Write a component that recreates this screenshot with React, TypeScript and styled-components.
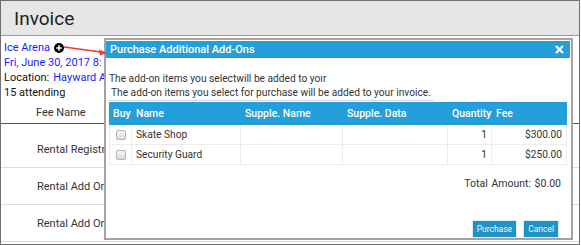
import React from "react";
import styled, { createGlobalStyle } from "styled-components";

const GlobalStyle = createGlobalStyle`
  html, body { margin: 0; padding: 0; background: #ffffff; }
  body { font-family: Roboto, "Liberation Sans", sans-serif; }
`;

const Frame = styled.div`
  position: relative;
  width: 580px;
  height: 245px;
  box-sizing: border-box;
  border: 1px solid #6e6e6e;
  overflow: hidden;
  background: #fff;
`;

const Header = styled.div`
  height: 34px;
  background: #e6e6e6;
  border-bottom: 1px solid #9a9a9a;
  display: flex;
  align-items: center;
  padding-left: 13px;
  font-size: 19px;
  color: #222;
`;

const Info = styled.div`
  padding: 4px 3px 0;
  display: flex;
  flex-direction: column;
  font-size: 11px;
  line-height: 15px;
  color: #111;
`;

const InfoLine = styled.div<{ $link?: boolean }>`
  display: flex;
  align-items: center;
  gap: 4px;
  white-space: nowrap;
  color: ${(p) => (p.$link ? "#1a1aff" : "#111")};
`;

const Link = styled.span`
  color: #1a1aff;
`;

const FeeTable = styled.div`
  margin-top: 1px;
  display: flex;
  flex-direction: column;
`;

const FeeHead = styled.div`
  height: 22px;
  border-bottom: 1px solid #555;
  display: flex;
  align-items: center;
  padding-left: 35px;
  font-size: 11px;
  color: #333;
`;

const FeeBody = styled.div`
  padding-top: 7px;
  display: flex;
  flex-direction: column;
`;

const FeeRow = styled.div`
  height: 36px;
  border-bottom: 1px solid #dcdcdc;
  display: flex;
  align-items: center;
  padding-left: 36px;
  font-size: 11px;
  color: #333;
  white-space: nowrap;
`;

const Dialog = styled.div`
  position: absolute;
  left: 103px;
  top: 37px;
  width: 469px;
  height: 202px;
  box-sizing: border-box;
  border: 2px solid #a3a3a3;
  background: #fff;
  display: flex;
  flex-direction: column;
`;

const TitleBar = styled.div`
  margin: 1px 1px 0 0;
  height: 17px;
  background: #259fd9;
  display: flex;
  align-items: center;
  justify-content: space-between;
  padding: 0 6px 0 4px;
  color: #fff;
  font-size: 11px;
  font-weight: 500;
`;

const Body = styled.div`
  flex: 1;
  display: flex;
  flex-direction: column;
  padding: 14px 4px 0 3px;
  font-size: 10.2px;
  color: #333;
`;

const Note = styled.div<{ $boxed?: boolean }>`
  line-height: 14px;
  white-space: nowrap;
  align-self: flex-start;
  padding-left: ${(p) => (p.$boxed ? "2px" : "0")};
  padding-right: ${(p) => (p.$boxed ? "3px" : "0")};
  border-bottom: ${(p) => (p.$boxed ? "1px solid #d6d6d6" : "none")};
`;

const Table = styled.div`
  margin-top: 1px;
  display: grid;
  grid-template-columns: 23px 109px 102px 105px 44px 75px;
`;

const HeadCell = styled.div`
  height: 23px;
  background: #259fd9;
  color: #fff;
  font-weight: 500;
  font-size: 10.5px;
  display: flex;
  align-items: center;
  padding-left: 4px;
  white-space: nowrap;
`;

const Cell = styled.div<{ $right?: boolean }>`
  height: 19px;
  border-bottom: 1px solid #ececec;
  border-right: 1px solid #ececec;
  display: flex;
  align-items: center;
  justify-content: ${(p) => (p.$right ? "flex-end" : "flex-start")};
  padding: 0 4px;
  font-size: 10.2px;
  color: #333;
  &:nth-child(6n + 1) {
    border-left: 1px solid #ececec;
    justify-content: center;
    padding: 0;
  }
`;

const Check = styled.span`
  width: 8px;
  height: 8px;
  border: 1px solid #b5b5b5;
  border-radius: 2px;
  background: linear-gradient(#f4f4f4, #dcdcdc);
`;

const Total = styled.div`
  margin-top: 12px;
  align-self: flex-end;
  padding-right: 6px;
  font-size: 10.5px;
  color: #333;
  word-spacing: 1px;
`;

const Actions = styled.div`
  margin-top: auto;
  margin-bottom: 1px;
  display: flex;
  justify-content: flex-end;
  gap: 8px;
  padding-right: 9px;
`;

const Button = styled.button`
  height: 16px;
  border: none;
  background: #1f93c6;
  color: #eaf6fc;
  font-family: Roboto, "Liberation Sans", sans-serif;
  font-size: 8.5px;
  padding: 0 4px;
  box-shadow: 0 0 1px #1f93c6;
`;

const Overlay = styled.svg`
  position: absolute;
  left: 0;
  top: 0;
  pointer-events: none;
`;

const PlusIcon = () => (
  <svg width="10" height="10" viewBox="0 0 10 10">
    <circle cx="5" cy="5" r="5" fill="#000" />
    <path d="M5 2.2v5.6M2.2 5h5.6" stroke="#fff" strokeWidth="1.6" />
  </svg>
);

const rows = [
  { name: "Skate Shop", qty: 1, fee: "$300.00" },
  { name: "Security Guard", qty: 1, fee: "$250.00" },
];

const App: React.FC = () => (
  <>
    <GlobalStyle />
    <Frame>
      <Header>Invoice</Header>
      <Info>
        <InfoLine $link>
          Ice Arena <PlusIcon />
        </InfoLine>
        <InfoLine $link>Fri, June 30, 2017 8:</InfoLine>
        <InfoLine>
          Location: <Link>Hayward A</Link>
        </InfoLine>
        <InfoLine>15 attending</InfoLine>
      </Info>
      <FeeTable>
        <FeeHead>Fee Name</FeeHead>
        <FeeBody>
          <FeeRow>Rental Registrat</FeeRow>
          <FeeRow>Rental Add On</FeeRow>
          <FeeRow>Rental Add On</FeeRow>
        </FeeBody>
      </FeeTable>

      <Dialog>
        <TitleBar>
          <span>Purchase Additional Add-Ons</span>
          <svg width="9" height="9" viewBox="0 0 9 9">
            <path d="M1 1l7 7M8 1l-7 7" stroke="#fff" strokeWidth="2.2" />
          </svg>
        </TitleBar>
        <Body>
          <Note>The add-on items you selectwill be added to yoır</Note>
          <Note $boxed>
            The add-on items you select for purchase will be added to your invoice.
          </Note>
          <Table>
            {["Buy", "Name", "Supple. Name", "Supple. Data", "Quantity", "Fee"].map(
              (h) => (
                <HeadCell key={h}>{h}</HeadCell>
              )
            )}
            {rows.map((r) => (
              <React.Fragment key={r.name}>
                <Cell>
                  <Check />
                </Cell>
                <Cell>{r.name}</Cell>
                <Cell />
                <Cell />
                <Cell $right>{r.qty}</Cell>
                <Cell $right>{r.fee}</Cell>
              </React.Fragment>
            ))}
          </Table>
          <Total>Total Amount: $0.00</Total>
          <Actions>
            <Button>Purchase</Button>
            <Button>Cancel</Button>
          </Actions>
        </Body>
      </Dialog>

      <Overlay width="580" height="245">
        <line x1="63" y1="46" x2="100" y2="51" stroke="#e8383d" strokeWidth="1.3" />
        <path d="M106 52 L98 48.5 L99 54.5 Z" fill="#e8383d" />
      </Overlay>
    </Frame>
  </>
);

export default App;
